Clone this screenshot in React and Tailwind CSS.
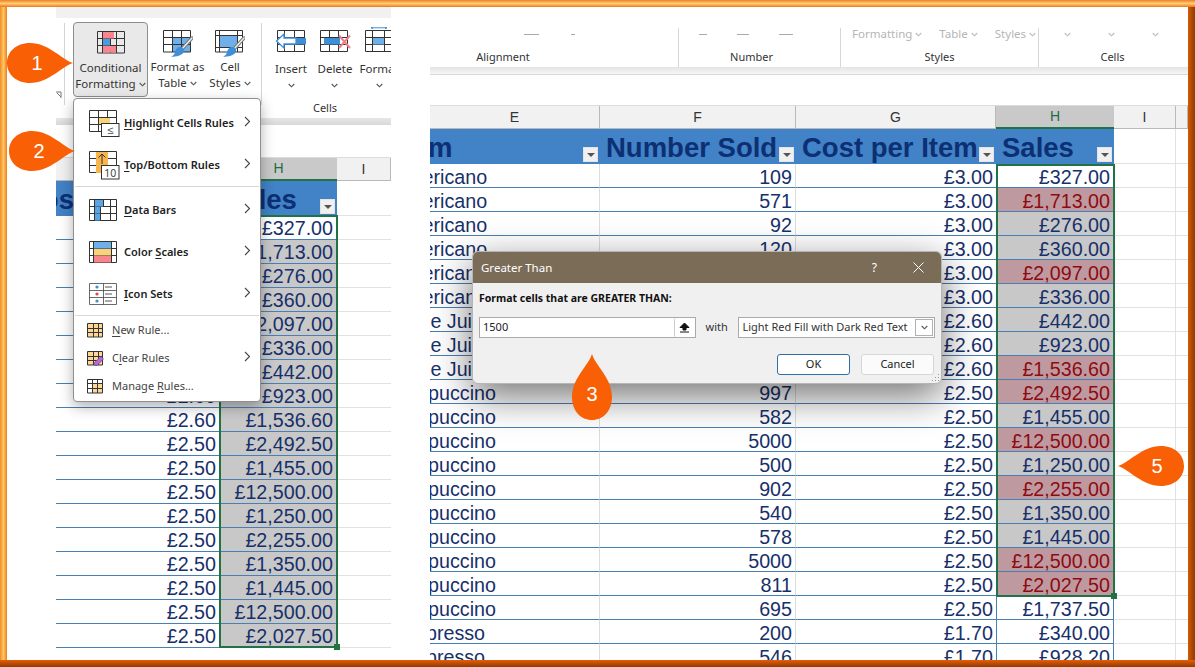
import React from "react";

const ui = "font-[Noto_Sans,sans-serif]";
const sheet = "font-[Liberation_Sans,Arial,sans-serif]";

function Chev({ className = "", color = "#555" }) {
  return (
    <svg width="7" height="5" viewBox="0 0 7 5" className={className}>
      <path d="M.7 1 3.5 3.8 6.3 1" fill="none" stroke={color} strokeWidth="1.1" />
    </svg>
  );
}

function Brush() {
  return (
    <g>
      <path d="M29 8 19 19" stroke="#777" strokeWidth="3.4" strokeLinecap="round" />
      <path d="M29 8 19 19" stroke="#eee" strokeWidth="1.4" strokeLinecap="round" />
      <path d="M16 17c3.500-.6 5.600 1.900 5 4.300-.8 3.300-6 5.900-12.800 5.400 3-1.400 3.300-3 4-5.200.6-2 1.800-4.100 3.800-4.500Z" fill="#3f8fd8" />
    </g>
  );
}

function IconCF() {
  return (
    <svg width="28" height="23" viewBox="0 0 28 23">
      <path d="M.5.5h27v21.500H.5ZM.5 7.500h27M.5 14.500h27M5.500.5v21.500M13.500.5v21.500M19.500.5v21.500" fill="none" stroke="#333" />
      <rect x="6" y="1" width="11" height="6.500" fill="#f8848e" />
      <rect x="6" y="8" width="7" height="6.500" fill="#4a9be0" />
      <rect x="6" y="15" width="13" height="6.500" fill="#f8848e" />
    </svg>
  );
}
function IconTable() {
  return (
    <svg width="30" height="28" viewBox="0 0 30 28" className="mb-[-5px]">
      <rect x="9" y="7" width="18" height="15" fill="#6fb0ea" />
      <path d="M.5.5h27v21.500H.5ZM.5 7.500h27M.5 14.500h27M9.500.5v21.500M18.500.5v21.500" fill="none" stroke="#333" />
      <Brush />
    </svg>
  );
}
function IconStyles() {
  return (
    <svg width="30" height="28" viewBox="0 0 30 28" className="mb-[-5px]">
      <path d="M.5.5h27v21.500H.5ZM.5 5.500h27M.5 17.500h27M4.500.5v21.500M22.500.5v21.500" fill="none" stroke="#333" />
      <rect x="5" y="6" width="17" height="11" fill="#6fb0ea" />
      <Brush />
    </svg>
  );
}
function IconInsert() {
  return (
    <svg width="32" height="23" viewBox="0 0 32 23">
      <path d="M2.500.5h27v21h-27ZM2.500 7.500h27M2.500 14.500h27M9.500.5v21M19.500.5v21" fill="none" stroke="#333" />
      <rect x="12" y="8" width="19" height="6.500" fill="#3f8fd8" />
      <path d="M9 4 1.500 11 9 18V14h12V8H9Z" fill="#fff" stroke="#3f8fd8" strokeWidth="1.300" />
    </svg>
  );
}
function IconDelete() {
  return (
    <svg width="31" height="23" viewBox="0 0 31 23">
      <path d="M.5.5h27v21H.5ZM.5 7.500h27M.5 14.500h27M9.500.5v21M18.500.5v21" fill="none" stroke="#333" />
      <rect x="4" y="8" width="16" height="6.500" fill="#3f8fd8" />
      <path d="M19 5.500 30 18M30 5.500 19 18" stroke="#ee7f86" strokeWidth="2" />
    </svg>
  );
}
function IconFormat() {
  return (
    <svg width="28" height="26" viewBox="0 0 28 26">
      <path d="M.5 3.500h27v21H.5ZM.5 10.500h27M.5 17.500h27M7.500 3.500v21M19.500 3.500v21" fill="none" stroke="#333" />
      <rect x="8" y="11" width="11" height="6.500" fill="#6fb0ea" />
      <path d="M6 .8h16M6 .8l2-.8M6 .8l2 .8M22 .8l-2-.8M22 .8l-2 .8" stroke="#3f8fd8" />
    </svg>
  );
}

const menuGrid = "M.5.5h27v21H.5ZM.5 7.500h27M.5 14.500h27M9.500.5v21M18.500.5v21";
function MIconHighlight() {
  return (
    <svg width="31" height="27" viewBox="0 0 31 27">
      <path d={menuGrid} fill="none" stroke="#333" />
      <rect x="10" y="8" width="11" height="6" fill="#fbd27a" />
      <rect x="12.500" y="13.500" width="17.500" height="13" fill="#fff" stroke="#333" />
      <text x="21.200" y="24" fontSize="11" textAnchor="middle" fill="#444" fontFamily="Noto Sans, sans-serif">≤</text>
    </svg>
  );
}
function MIconTop() {
  return (
    <svg width="31" height="29" viewBox="0 0 31 29">
      <path d={menuGrid} fill="none" stroke="#333" />
      <rect x="7" y="1" width="12" height="21" fill="#f6b64d" />
      <path d="M13 13V3.500M9.500 6.500 13 3l3.500 3.500" fill="none" stroke="#333" />
      <rect x="12.500" y="14.500" width="17.500" height="13.500" fill="#fff" stroke="#333" />
      <text x="21.200" y="25.500" fontSize="10.500" textAnchor="middle" fill="#444" fontFamily="Noto Sans, sans-serif">10</text>
    </svg>
  );
}
function MIconBars() {
  return (
    <svg width="28" height="22" viewBox="0 0 28 22">
      <path d="M.5.5h27v21H.5ZM.5 7.500h27M.5 14.500h27M5.500.5v21M14.500.5v7M11.500 7.500v14M21.500.5v21" fill="none" stroke="#333" />
      <rect x="6" y="1" width="8" height="6.500" fill="#5aa5e6" />
      <rect x="6" y="8" width="5" height="6.500" fill="#5aa5e6" />
      <rect x="6" y="15" width="5" height="6.500" fill="#5aa5e6" />
    </svg>
  );
}
function MIconScales() {
  return (
    <svg width="28" height="22" viewBox="0 0 28 22">
      <path d="M.5.5h27v21H.5ZM.5 7.500h27M.5 14.500h27M4.500.5v21M22.500.5v21" fill="none" stroke="#333" />
      <rect x="5" y="1" width="17" height="6.500" fill="#6fb0ea" />
      <rect x="5" y="8" width="17" height="6.500" fill="#fbd27a" />
      <rect x="5" y="15" width="17" height="6.500" fill="#f8848e" />
    </svg>
  );
}
function MIconSets() {
  return (
    <svg width="28" height="22" viewBox="0 0 28 22">
      <path d="M.5.5h27v21H.5ZM.5 7.500h27M.5 14.500h27M14.500.5v21" fill="none" stroke="#444" strokeWidth=".8" />
      <circle cx="8" cy="4" r="1.600" fill="#3f8fd8" />
      <circle cx="8" cy="11" r="1.600" fill="#e8404a" />
      <circle cx="8" cy="18" r="1.600" fill="#3f8fd8" />
      <path d="M16 4h7M16 11h7M16 18h7" stroke="#555" />
    </svg>
  );
}
function SIcon({ kind }) {
  return (
    <svg width="17" height="15" viewBox="0 0 17 15">
      <rect x="1" y="1" width="15" height="13" fill={kind === "manage" ? "#fff" : "#fdd79a"} />
      {kind === "manage" && <rect x="6" y="5" width="10" height="9" fill="#fdd79a" />}
      <path d={kind === "manage" ? "M.5.5h15v13.500H.5ZM.5 4.500h15M.5 9.500h15M5.500.5v13.500M10.500.5v13.500" : "M.5.5h15v13.500H.5ZM.5 5.500h15M.5 9.500h15M6.500.5v13.500M11.500.5v13.500"} fill="none" stroke="#333" />
      {kind === "clear" && <path d="M7 12 14 5.500l2.500 2.500L10 14.500H8Z" fill="#b56bd1" stroke="#7c3f9c" strokeWidth=".7" />}
    </svg>
  );
}

function RibbonBtn({ icon, lines, width, active, chevRow }) {
  return (
    <div className={`flex flex-col items-center shrink-0 ${width} h-[75px] pt-[8px] ${active ? "bg-[#e9e9e9] border border-[#8d8d8d] rounded-[4px]" : ""}`}>
      <div className="h-[23px] flex items-end justify-center">{icon}</div>
      <div className={`${chevRow ? "mt-[8px]" : "mt-[6px]"} flex flex-col items-center text-[11.500px] leading-[16px] text-[#333] whitespace-nowrap`}>
        {lines.map((l, i) => (
          <span key={i} className="flex items-center gap-[3px]">
            {l}
            {i === lines.length - 1 && !chevRow && <Chev />}
          </span>
        ))}
        {chevRow && <span className="h-[16px] flex items-center"><Chev /></span>}
      </div>
    </div>
  );
}

function LeftRibbon() {
  return (
    <div className={`${ui} h-[100px] shrink-0 flex bg-white overflow-hidden`}>
      <div className="w-[9px] shrink-0 flex flex-col items-start justify-end pb-[6px] border-r border-[#d4d4d4] h-[82px] mt-[5px]">
        <svg width="6" height="8" viewBox="0 0 6 8"><path d="M0 1h5v6M1 2l4 4" fill="none" stroke="#777" /></svg>
      </div>
      <div className="ml-[8px] mt-[4px]">
        <RibbonBtn active width="w-[75px]" icon={<IconCF />} lines={["Conditional", "Formatting"]} />
      </div>
      <div className="mt-[4px] flex pl-[2px]">
        <RibbonBtn width="w-[55px]" icon={<IconTable />} lines={["Format as", "Table"]} />
        <RibbonBtn width="w-[50px]" icon={<IconStyles />} lines={["Cell", "Styles"]} />
      </div>
      <div className="w-[7px] shrink-0 border-r border-[#d4d4d4] h-[82px] mt-[5px]" />
      <div className="flex-1 flex flex-col min-w-0">
        <div className="flex mt-[4px] pl-[7px]">
          <RibbonBtn chevRow width="w-[44px]" icon={<IconInsert />} lines={["Insert"]} />
          <RibbonBtn chevRow width="w-[44px]" icon={<IconDelete />} lines={["Delete"]} />
          <RibbonBtn chevRow width="w-[44px]" icon={<IconFormat />} lines={["Format"]} />
        </div>
        <div className="text-[11px] leading-[16px] text-[#333] text-center mt-[3px] -ml-[3px]">Cells</div>
      </div>
    </div>
  );
}

function Item({ icon, children, arrow, big }) {
  return (
    <div className={`flex items-center ${big ? "h-[42px] pl-[15px]" : "h-[28px] pl-[13px]"} pr-[9px]`}>
      <div className={`${big ? "w-[35px]" : "w-[25px]"} shrink-0 flex items-center`}>{icon}</div>
      <div className={`flex-1 whitespace-nowrap ${big ? "text-[11px] font-semibold text-[#222]" : "text-[11px] text-[#444]"}`}>{children}</div>
      {arrow && (
        <svg width="7" height="11" viewBox="0 0 7 11" className="mb-[4px]"><path d="M1 1l4.500 4.500L1 10" fill="none" stroke="#444" strokeWidth="1.100" /></svg>
      )}
    </div>
  );
}
const U = ({ children }) => <span className="underline underline-offset-2">{children}</span>;

function Menu() {
  return (
    <div className={`${ui} absolute left-[66px] top-[91px] w-[188px] h-[304px] bg-white border border-[#8f8f8f] rounded-[4px] shadow-[0_5px_14px_rgba(0,0,0,0.3)] pt-[3px] z-20`}>
      <Item big arrow icon={<MIconHighlight />}><U>H</U>ighlight Cells Rules</Item>
      <Item big arrow icon={<MIconTop />}><U>T</U>op/Bottom Rules</Item>
      <div className="h-px bg-[#d8d8d8] ml-[1px] mr-[1px]" />
      <div className="h-[2px]" />
      <Item big arrow icon={<MIconBars />}><U>D</U>ata Bars</Item>
      <Item big arrow icon={<MIconScales />}>Color <U>S</U>cales</Item>
      <Item big arrow icon={<MIconSets />}><U>I</U>con Sets</Item>
      <div className="h-px bg-[#d8d8d8] ml-[1px] mr-[1px]" />
      <Item icon={<SIcon kind="new" />}><U>N</U>ew Rule...</Item>
      <Item arrow icon={<SIcon kind="clear" />}>C<U>l</U>ear Rules</Item>
      <Item icon={<SIcon kind="manage" />}>Manage <U>R</U>ules...</Item>
    </div>
  );
}

function Filter() {
  return (
    <div className="shrink-0 ml-auto self-end mb-[2px] mr-[2px] w-[15px] h-[15px] bg-[#f0f0f0] border border-[#e4e4e4] flex items-center justify-center">
      <div className="w-0 h-0 border-x-[4px] border-x-transparent border-t-[4px] border-t-[#555]" />
    </div>
  );
}

function ColHead({ cols }) {
  return (
    <div className={`flex h-[24px] shrink-0 bg-[#f1f1f1] border-t border-[#dcdcdc] ${sheet} text-[14px] text-[#333]`}>
      {cols.map((c) => (
        <div
          key={c.n + c.w}
          className={`${c.w} shrink-0 flex items-center justify-center ${c.on ? "bg-[#c9c9c9] text-[#1f6b45] border-b-2 border-[#217346]" : "border-r border-b border-[#b9b9b9]"}`}
        >
          {c.n}
        </div>
      ))}
    </div>
  );
}

const navy = "text-[#17306b]";
const rowLine = "border-b border-[#4a7fb3]";

const sales = [
  ["£327.00", "w"], ["£1,713.00", "r"], ["£276.00", "g"], ["£360.00", "g"], ["£2,097.00", "r"], ["£336.00", "g"],
  ["£442.00", "g"], ["£923.00", "g"], ["£1,536.60", "r"], ["£2,492.50", "r"], ["£1,455.00", "g"], ["£12,500.00", "r"],
  ["£1,250.00", "g"], ["£2,255.00", "r"], ["£1,350.00", "g"], ["£1,445.00", "g"], ["£12,500.00", "r"], ["£2,027.50", "r"],
];

const am = ["Americano", "ml-[-37px]"];
const aj = ["Apple Juice", "ml-[-39px]"];
const cp = ["Cappuccino", "ml-[-38px]"];
const es = ["Espresso", "ml-[-27px]"];
const rightRows = [
  [am, "109", "£3.00"], [am, "571", "£3.00"], [am, "92", "£3.00"], [am, "120", "£3.00"], [am, "699", "£3.00"], [am, "112", "£3.00"],
  [aj, "170", "£2.60"], [aj, "355", "£2.60"], [aj, "591", "£2.60"], [cp, "997", "£2.50"], [cp, "582", "£2.50"], [cp, "5000", "£2.50"],
  [cp, "500", "£2.50"], [cp, "902", "£2.50"], [cp, "540", "£2.50"], [cp, "578", "£2.50"], [cp, "5000", "£2.50"], [cp, "811", "£2.50"],
  [cp, "695", "£2.50"], [es, "200", "£1.70"], [es, "546", "£1.70"],
];
const rightSales = [...sales, ["£1,737.50", "w"], ["£340.00", "w"], ["£928.20", "w"]];

function LeftPanel() {
  const g = ["£3.00", "£3.00", "£3.00", "£3.00", "£3.00", "£3.00", "£2.60", "£2.60", "£2.60", "£2.50", "£2.50", "£2.50", "£2.50", "£2.50", "£2.50", "£2.50", "£2.50", "£2.50"];
  return (
    <div className="w-[335px] shrink-0 flex flex-col overflow-hidden">
      <div className="h-[11px] shrink-0 bg-[#f1f1f1]" />
      <LeftRibbon />
      <div className="h-[7px] shrink-0 bg-gradient-to-b from-[#e6e6e6] to-[#d8d8d8]" />
      <div className="h-[32px] shrink-0" />
      <ColHead cols={[{ n: "G", w: "w-[164px]" }, { n: "H", w: "w-[117px]", on: true }, { n: "I", w: "w-[54px]" }]} />
      <div className={`${sheet} flex h-[35px] shrink-0 overflow-hidden`}>
        <div className="w-[163px] shrink-0 bg-[#4282c6] text-[27.500px] font-bold text-[#0d2f73] flex items-center whitespace-nowrap overflow-hidden pt-[2px]">
          <span className="ml-[-34px]">Cost per Item</span>
        </div>
        <div className="w-[118px] shrink-0 bg-[#4282c6] text-[27.500px] font-bold text-[#0d2f73] flex items-center pl-[6px] pt-[2px]">
          Sales<Filter />
        </div>
        <div className="flex-1 border-b border-[#e2e2e2]" />
      </div>
      <div className={`${sheet} text-[19.700px] ${navy}`}>
        {sales.map((s, i) => (
          <div key={i} className="flex h-[24px]">
            <div className={`w-[163px] shrink-0 ${rowLine} text-right pr-[3px] leading-[24px]`}>{g[i]}</div>
            <div className={`w-[118px] shrink-0 ${rowLine} text-right pr-[4px] leading-[24px] ${i === 0 ? "bg-white" : "bg-[#c8c8c8]"}`}>{s[0]}</div>
            <div className="flex-1 border-b border-[#e2e2e2]" />
          </div>
        ))}
      </div>
    </div>
  );
}

function RightRibbon() {
  const lab = "text-[11px] leading-[16px] text-[#333] text-center";
  return (
    <div className={`${ui} h-[60px] shrink-0 flex bg-white pt-[21px]`}>
      <div className="w-[249px] shrink-0 border-r border-[#d6d6d6] flex flex-col">
        <div className="h-[12px] flex items-center pl-[94px] gap-[32px]">
          <span className="w-[15px] h-px bg-[#aaa]" /><span className="w-[4px] h-px bg-[#aaa]" />
        </div>
        <div className={`${lab} mt-[9px] pr-[102px]`}>Alignment</div>
      </div>
      <div className="w-[162px] shrink-0 border-r border-[#d6d6d6] flex flex-col">
        <div className="h-[12px] flex items-center pl-[20px] gap-[30px]">
          <span className="w-[8px] h-px bg-[#aaa]" /><span className="w-[12px] h-px bg-[#aaa]" /><span className="w-[14px] h-px bg-[#aaa]" />
        </div>
        <div className={`${lab} mt-[9px] pr-[16px]`}>Number</div>
      </div>
      <div className="w-[198px] shrink-0 border-r border-[#d6d6d6] flex flex-col">
        <div className="h-[12px] flex items-center pl-[11px] gap-[17px] text-[11.500px] text-[#b5b5b5] whitespace-nowrap">
          <span className="flex items-center gap-[3px]">Formatting<Chev color="#bbb" /></span>
          <span className="flex items-center gap-[3px]">Table<Chev color="#bbb" /></span>
          <span className="flex items-center gap-[3px]">Styles<Chev color="#bbb" /></span>
        </div>
        <div className={`${lab} mt-[9px]`}>Styles</div>
      </div>
      <div className="w-[147px] shrink-0 flex flex-col">
        <div className="h-[12px] flex items-center pl-[25px] gap-[37px]">
          <Chev color="#bbb" /><Chev color="#bbb" /><Chev color="#bbb" />
        </div>
        <div className={`${lab} mt-[9px]`}>Cells</div>
      </div>
    </div>
  );
}

function RightPanel() {
  const hd = "shrink-0 bg-[#4282c6] flex items-center whitespace-nowrap overflow-hidden pt-[2px]";
  return (
    <div className="w-[758px] shrink-0 flex flex-col overflow-hidden">
      <RightRibbon />
      <div className="h-[8px] shrink-0 bg-gradient-to-b from-[#e4e4e4] to-[#f6f6f6] border-b border-[#d8d8d8]" />
      <div className="h-[30px] shrink-0" />
      <ColHead cols={[
        { n: "E", w: "w-[170px]" }, { n: "F", w: "w-[196px]" }, { n: "G", w: "w-[200px]" },
        { n: "H", w: "w-[118px]", on: true }, { n: "I", w: "w-[62px]" }, { n: "", w: "w-[12px]" },
      ]} />
      <div className={`${sheet} flex h-[35px] shrink-0 text-[27.500px] font-bold text-[#0d2f73]`}>
        <div className={`${hd} w-[170px]`}><span className="ml-[-34px]">Item</span><Filter /></div>
        <div className={`${hd} w-[196px] pl-[6px]`}>Number Sold<Filter /></div>
        <div className={`${hd} w-[200px] pl-[6px]`}>Cost per Item<Filter /></div>
        <div className={`${hd} w-[118px] pl-[6px]`}>Sales<Filter /></div>
        <div className="w-[62px] border-b border-r border-[#e2e2e2]" />
        <div className="flex-1 border-b border-[#e2e2e2]" />
      </div>
      <div className={`${sheet} text-[19.700px] ${navy} shrink-0`}>
        {rightRows.map((r, i) => {
          const k = rightSales[i][1];
          return (
            <div key={i} className="flex h-[24px]">
              <div className={`w-[170px] shrink-0 ${rowLine} border-r border-r-[#dcdcdc] leading-[26px] whitespace-nowrap overflow-hidden`}>
                <span className={`inline-block ${r[0][1]}`}>{r[0][0]}</span>
              </div>
              <div className={`w-[196px] shrink-0 ${rowLine} border-r border-r-[#dcdcdc] text-right pr-[3px] leading-[26px]`}>{r[1]}</div>
              <div className={`w-[200px] shrink-0 ${rowLine} text-right pr-[3px] leading-[26px]`}>{r[2]}</div>
              <div className={`w-[118px] shrink-0 ${rowLine} border-x border-x-[#4a7fb3] text-right pr-[3px] leading-[26px] ${k === "r" ? "bg-[#be9aa0] text-[#8f0a12]" : k === "g" ? "bg-[#c8c8c8]" : "bg-white"}`}>
                {rightSales[i][0]}
              </div>
              <div className="w-[62px] shrink-0 border-b border-r border-[#e2e2e2]" />
              <div className="flex-1 border-b border-[#e2e2e2]" />
            </div>
          );
        })}
      </div>
    </div>
  );
}

function Dialog() {
  return (
    <div className={`${ui} absolute left-[465px] top-[244px] w-[470px] h-[133px] rounded-[6px] bg-[#f0f0f0] border border-[#b5b5b5] shadow-[0_12px_38px_rgba(0,0,0,0.55)] overflow-hidden z-20`}>
      <div className="h-[31px] bg-[#7b6c58] flex items-center pl-[8px] text-white text-[11.500px]">
        <span>Greater Than</span>
        <span className="ml-auto text-[12px] mr-[36px]">?</span>
        <svg width="11" height="11" viewBox="0 0 11 11" className="mr-[17px]"><path d="M.5.5l10 10M10.500.5l-10 10" stroke="#fff" /></svg>
      </div>
      <div className="px-[6px] pt-[7px]">
        <div className="text-[10.500px] leading-[16px] font-bold text-[#111]">Format cells that are GREATER THAN:</div>
        <div className="flex items-center mt-[11px]">
          <div className="w-[217px] h-[21px] bg-white border border-[#ababab] flex items-center pl-[3px] text-[11px] text-[#222]">
            <span>1500</span>
            <div className="ml-auto w-[21px] h-[19px] bg-white border-l border-[#ccc] rounded-[2px] flex items-center justify-center">
              <svg width="11" height="11" viewBox="0 0 11 11"><path d="M5.500 1 1 5.500h3V8h3V5.500h3ZM1 10h9" fill="#111" stroke="#111" /></svg>
            </div>
          </div>
          <span className="ml-[10px] w-[33px] text-[11px] text-[#333]">with</span>
          <div className="w-[197px] h-[21px] bg-white border border-[#ababab] flex items-center pl-[3px] text-[11px] text-[#333] whitespace-nowrap">
            <span>Light Red Fill with Dark Red Text</span>
            <div className="ml-auto w-[18px] h-[17px] mr-px border border-[#b0b0b0] flex items-center justify-center">
              <Chev />
            </div>
          </div>
        </div>
        <div className="flex justify-end mt-[16px] pr-[1px] gap-[11px] text-[11px] text-[#222]">
          <div className="w-[73px] h-[21px] bg-white border border-[#2f6ea5] rounded-[3px] flex items-center justify-center">OK</div>
          <div className="w-[73px] h-[21px] bg-[#fbfbfb] border border-[#d6d6d6] rounded-[3px] flex items-center justify-center">Cancel</div>
        </div>
      </div>
      <svg width="9" height="9" viewBox="0 0 9 9" className="absolute right-[1px] bottom-[1px]">
        <path d="M7 1h1v1H7ZM4 4h1v1H4ZM7 4h1v1H7ZM1 7h1v1H1ZM4 7h1v1H4ZM7 7h1v1H7Z" fill="#999" />
      </svg>
    </div>
  );
}

function Tear({ n, pos, rot = "", num = "" }) {
  return (
    <div className={`absolute ${pos} w-[66px] h-[40px] z-30`}>
      <svg width="66" height="40" viewBox="0 0 66 40" className={`block overflow-visible ${rot}`}>
        <path d="M66 20C55 17 42 0 23 0 9 0 0 9 0 20s9 20 23 20C42 40 55 23 66 20Z" fill="#f95f05" />
      </svg>
      <div className={`absolute inset-0 flex items-center justify-center text-white text-[20px] ${sheet} ${num}`}>{n}</div>
    </div>
  );
}

export default function App() {
  return (
    <div className="w-[1195px] h-[667px] flex flex-col overflow-hidden bg-white">
      <div className="h-[7px] shrink-0 bg-gradient-to-b from-[#f07f20] via-[#fdcf72] to-[#ee741a]" />
      <div className="flex-1 flex min-h-0">
        <div className="w-[7px] shrink-0 bg-gradient-to-r from-[#f08a2a] via-[#fdc860] to-[#ee7a1e]" />
        <div className="w-[1181px] shrink-0 relative flex overflow-hidden">
          <div className="w-[49px] shrink-0" />
          <LeftPanel />
          <div className="w-[39px] shrink-0" />
          <RightPanel />

          <div className="absolute left-[212px] top-[208px] w-[119px] h-[433px] border-2 border-[#217346] z-10 pointer-events-none" />
          <div className="absolute left-[327px] top-[637px] w-[6px] h-[6px] bg-[#217346] z-10" />
          <div className="absolute left-[989px] top-[157px] w-[119px] h-[433px] border-2 border-[#217346] z-10 pointer-events-none" />
          <div className="absolute left-[1104px] top-[586px] w-[6px] h-[6px] bg-[#217346] z-10" />

          <Menu />
          <Dialog />

          <Tear n="1" pos="left-[0px] top-[36px]" num="pr-[6px]" />
          <Tear n="2" pos="left-[2px] top-[124px]" num="pr-[6px]" />
          <Tear n="3" pos="left-[552px] top-[360px]" rot="-rotate-90" num="pt-[14px]" />
          <Tear n="5" pos="left-[1111px] top-[439px]" rot="rotate-180" num="pl-[12px]" />
        </div>
        <div className="w-[7px] shrink-0 bg-gradient-to-r from-[#d45a05] to-[#8f3c03]" />
      </div>
      <div className="h-[7px] shrink-0 bg-gradient-to-b from-[#e85d05] to-[#8f3c03]" />
    </div>
  );
}
